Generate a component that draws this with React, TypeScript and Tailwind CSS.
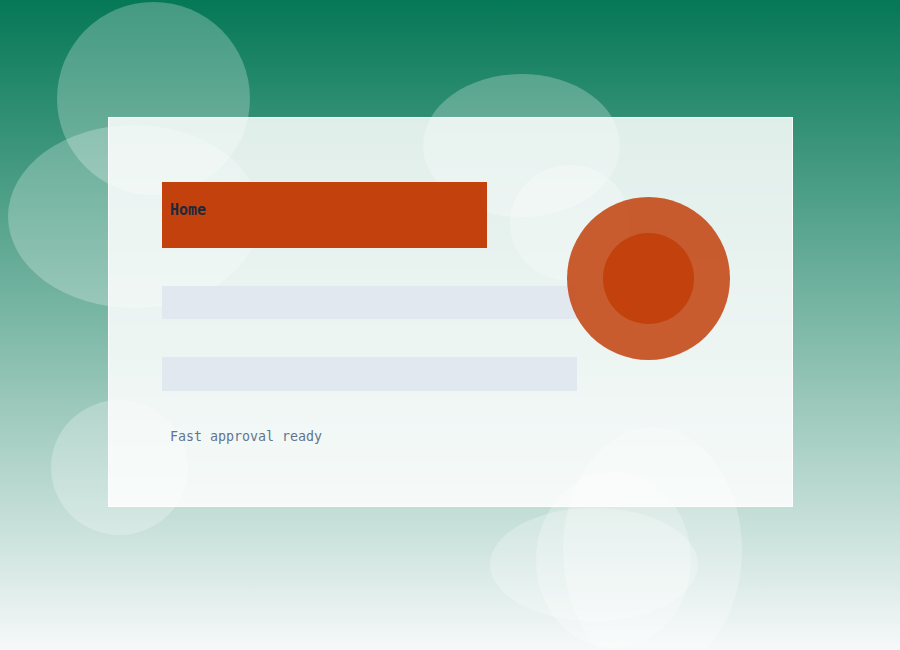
import React from 'react';

// soft background blobs, page coordinates
const bubbles = [
  { cls: 'left-[57px] top-[2px] w-[193px] h-[193px]' },
  { cls: 'left-[8px] top-[125px] w-[252px] h-[183px]' },
  { cls: 'left-[423px] top-[74px] w-[197px] h-[143px]' },
  { cls: 'left-[510px] top-[165px] w-[120px] h-[116px]' },
  { cls: 'left-[51px] top-[400px] w-[137px] h-[135px]' },
  { cls: 'left-[490px] top-[508px] w-[208px] h-[113px]' },
  { cls: 'left-[536px] top-[472px] w-[155px] h-[176px]' },
  { cls: 'left-[563px] top-[427px] w-[179px] h-[246px]' },
];

export default function App() {
  return (
    <div className="relative h-[650px] w-full overflow-hidden bg-linear-to-b/srgb from-[#057856] to-[#f6f9f9] pl-[108px] pt-[117px] font-['DejaVu_Sans_Mono',monospace]">
      {bubbles.map((b, i) => (
        <div key={i} className={`absolute rounded-[50%] bg-white/25 ${b.cls}`} />
      ))}

      <div className="relative w-[685px] h-[390px] border border-white/70 bg-white/85 pl-[53px] pt-[64px]">
        <div className="w-[325px] h-[66px] bg-[#c2410c] pl-2 pt-[16px]">
          <span className="text-[15px] leading-5 font-bold text-slate-800">Home</span>
        </div>
        <div className="mt-[38px] w-[415px] h-[33px] bg-slate-200" />
        <div className="mt-[38px] w-[415px] h-[34px] bg-slate-200" />
        <p className="mt-[36px] pl-2 text-[13.3px] leading-5 text-slate-500">Fast approval ready</p>

        {/* status dot */}
        <div className="absolute left-[458px] top-[79px] flex h-[163px] w-[163px] items-center justify-center rounded-full bg-[#c2410c]/85">
          <div className="h-[91px] w-[91px] rounded-full bg-[#c2410c]" />
        </div>
      </div>
    </div>
  );
}
